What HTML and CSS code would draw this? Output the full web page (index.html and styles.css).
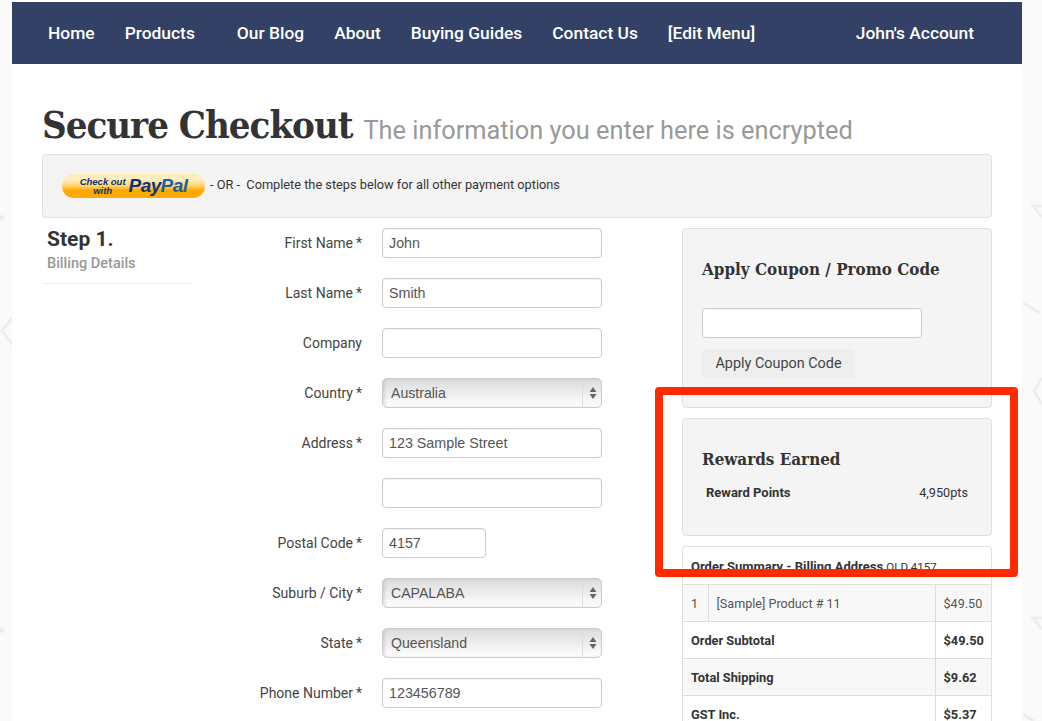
FILE: index.html
```html
<!DOCTYPE html>
<html lang="en">
<head>
    <meta charset="UTF-8">
    <title>Secure Checkout</title>
    <link rel="stylesheet" href="styles.css">
</head>
<body>

<!-- faint pattern on the page background -->
<svg class="pattern" width="1042" height="721" viewBox="0 0 1042 721">
    <g fill="none" stroke="#eeeeee" stroke-width="3">
        <path d="M12 318 L2 331 L12 344"/>
        <path d="M1042 206 L1033 206 L1042 217"/>
        <path d="M1023 303 L1040 313"/>
        <path d="M1042 378 L1034 391 L1042 404"/>
        <path d="M1042 618 L1033 618 L1042 629"/>
        <path d="M1023 714 L1034 721"/>
    </g>
    <g fill="#eeeeee">
        <circle cx="1" cy="218" r="3"/>
        <circle cx="1" cy="630" r="3"/>
    </g>
</svg>

<div class="page">
    <nav class="main-nav">
        <a href="#">Home</a>
        <a href="#" class="has-menu">Products</a>
        <a href="#">Our Blog</a>
        <a href="#">About</a>
        <a href="#">Buying Guides</a>
        <a href="#">Contact Us</a>
        <a href="#">[Edit Menu]</a>
        <a href="#" class="account">John's Account</a>
    </nav>

    <div class="content">
        <h1>Secure Checkout <small>The information you enter here is encrypted</small></h1>

        <div class="paypal-bar">
            <a href="#" class="paypal-btn">
                <span class="pp-check">Check out<br>with</span>
                <span class="pp-logo"><span class="pp-pay">Pay</span><span class="pp-pal">Pal</span></span>
            </a>
            <span class="paypal-note">- OR -&nbsp; Complete the steps below for all other payment options</span>
        </div>

        <div class="checkout">
            <div class="step">
                <h2>Step 1.</h2>
                <p>Billing Details</p>
            </div>

            <form class="billing">
                <div class="row">
                    <label>First Name<i>*</i></label>
                    <input type="text" value="John">
                </div>
                <div class="row">
                    <label>Last Name<i>*</i></label>
                    <input type="text" value="Smith">
                </div>
                <div class="row">
                    <label>Company</label>
                    <input type="text">
                </div>
                <div class="row">
                    <label>Country<i>*</i></label>
                    <div class="select-box">
                        <select><option>Australia</option></select>
                        <svg class="arrows" width="8" height="14" viewBox="0 0 8 14"><path d="M4 1 L7.5 6 L.5 6 Z M4 13 L.5 8 L7.5 8 Z"/></svg>
                    </div>
                </div>
                <div class="row">
                    <label>Address<i>*</i></label>
                    <input type="text" value="123 Sample Street">
                </div>
                <div class="row">
                    <label></label>
                    <input type="text">
                </div>
                <div class="row">
                    <label>Postal Code<i>*</i></label>
                    <input type="text" class="short" value="4157">
                </div>
                <div class="row">
                    <label>Suburb / City<i>*</i></label>
                    <div class="select-box">
                        <select><option>CAPALABA</option></select>
                        <svg class="arrows" width="8" height="14" viewBox="0 0 8 14"><path d="M4 1 L7.5 6 L.5 6 Z M4 13 L.5 8 L7.5 8 Z"/></svg>
                    </div>
                </div>
                <div class="row">
                    <label>State<i>*</i></label>
                    <div class="select-box">
                        <select><option>Queensland</option></select>
                        <svg class="arrows" width="8" height="14" viewBox="0 0 8 14"><path d="M4 1 L7.5 6 L.5 6 Z M4 13 L.5 8 L7.5 8 Z"/></svg>
                    </div>
                </div>
                <div class="row">
                    <label>Phone Number<i>*</i></label>
                    <input type="text" value="123456789">
                </div>
            </form>

            <div class="sidebar">
                <div class="panel coupon">
                    <h3>Apply Coupon / Promo Code</h3>
                    <input type="text">
                    <button type="button">Apply Coupon Code</button>
                </div>

                <div class="panel rewards">
                    <h3>Rewards Earned</h3>
                    <div class="reward-row">
                        <b>Reward Points</b>
                        <span>4,950pts</span>
                    </div>
                </div>

                <div class="summary">
                    <div class="summary-head"><b>Order Summary - Billing Address</b> <span>QLD 4157</span></div>
                    <table>
                        <colgroup>
                            <col class="col-qty">
                            <col>
                            <col class="col-price">
                        </colgroup>
                        <tr class="odd">
                            <td>1</td>
                            <td>[Sample] Product # 11</td>
                            <td>$49.50</td>
                        </tr>
                        <tr class="total">
                            <td colspan="2">Order Subtotal</td>
                            <td>$49.50</td>
                        </tr>
                        <tr class="total odd">
                            <td colspan="2">Total Shipping</td>
                            <td>$9.62</td>
                        </tr>
                        <tr class="total">
                            <td colspan="2">GST Inc.</td>
                            <td>$5.37</td>
                        </tr>
                    </table>
                </div>
            </div>
        </div>
    </div>
</div>

<div class="highlight"></div>

</body>
</html>
```

FILE: styles.css
```css
html, body {
    height: 100%;
    margin: 0;
    overflow: hidden;
}
body {
    font-family: Roboto, sans-serif;
    background-color: #fafafa;
    color: #333;
    position: relative;
}
.pattern {
    position: absolute;
    left: 0;
    top: 0;
}
.page {
    position: relative;
    margin: 0 20px 0 12px;
    padding-top: 2px;
    background-color: white;
    min-height: 100%;
}

/* top navigation */
.main-nav {
    display: flex;
    align-items: center;
    height: 62px;
    padding: 0 48px 0 36px;
    gap: 30px;
    background-color: #334166;
}
.main-nav a {
    color: white;
    font-size: 17.4px;
    line-height: 22px;
    font-weight: 500;
    text-decoration: none;
}
.main-nav .has-menu {
    margin-right: 12px;
}
.main-nav .account {
    margin-left: auto;
}

.content {
    padding: 0 30px;
}
h1 {
    margin: 39px 0 0;
    height: 51px;
    font-family: "DejaVu Serif Condensed", "DejaVu Serif", serif;
    font-size: 38px;
    line-height: 44px;
    font-weight: bold;
    letter-spacing: -1px;
    color: #333;
    white-space: nowrap;
}
h1 small {
    font-family: Roboto, sans-serif;
    font-size: 25.35px;
    font-weight: 400;
    letter-spacing: 0;
    color: #999;
    vertical-align: -1px;
}

/* paypal strip */
.paypal-bar {
    display: flex;
    align-items: center;
    height: 62px;
    padding-left: 19px;
    background-color: #f4f4f4;
    border: 1px solid #e0e0e0;
    border-radius: 4px;
}
.paypal-btn {
    display: flex;
    align-items: center;
    justify-content: center;
    gap: 3px;
    width: 143px;
    height: 24px;
    border-radius: 12px;
    background: linear-gradient(#ffe9ad, #fff0c8 20%, #ffd36b 50%, #ffa700 68%, #ffab00);
    text-decoration: none;
    font-family: "Liberation Sans", sans-serif;
    font-style: italic;
    font-weight: bold;
}
.pp-check {
    font-size: 9.5px;
    line-height: 9px;
    text-align: center;
    color: #0b3673;
}
.pp-logo {
    font-size: 19px;
    letter-spacing: -0.6px;
}
.pp-pay {
    color: #0d3277;
}
.pp-pal {
    color: #1b5ea8;
}
.paypal-note {
    margin: 0 0 4px 5px;
    font-size: 12.75px;
    color: #333;
}

.checkout {
    display: flex;
    margin-top: 10px;
}

/* step heading */
.step {
    width: 150px;
    height: 55px;
    border-bottom: 1px solid #eee;
}
.step h2 {
    margin: 0 0 0 5px;
    font-size: 21px;
    line-height: 22px;
    font-weight: bold;
}
.step p {
    margin: 5px 0 0 5px;
    font-size: 14.5px;
    font-weight: 500;
    color: #999;
}

/* billing form */
.billing {
    width: 410px;
    margin-right: 80px;
}
.row {
    display: flex;
    align-items: center;
    margin-bottom: 20px;
}
.row label {
    width: 170px;
    margin-right: 20px;
    text-align: right;
    font-size: 14px;
    color: #444;
}
.row label i {
    margin-left: 3px;
    font-style: normal;
}
input {
    box-sizing: border-box;
    width: 220px;
    height: 30px;
    padding: 0 6px;
    background: white;
    border: 1px solid #ccc;
    border-radius: 4px;
    font-family: "Liberation Sans", sans-serif;
    font-size: 14.3px;
    color: #555;
    box-shadow: inset 0 1px 1px rgba(0, 0, 0, 0.05);
}
input.short {
    width: 104px;
}
.select-box {
    position: relative;
    width: 220px;
    height: 30px;
}
.select-box select {
    appearance: none;
    box-sizing: border-box;
    width: 100%;
    height: 100%;
    padding: 0 8px;
    border: 1px solid #ccc;
    border-radius: 5px;
    background: linear-gradient(#dcdcdc, #f0f0f0 60%, white);
    box-shadow: inset 2px 0 3px rgba(0, 0, 0, 0.1);
    font-family: "Liberation Sans", sans-serif;
    font-size: 14.1px;
    color: #555;
}
.select-box::after {
    content: "";
    position: absolute;
    right: 19px;
    top: 1px;
    bottom: 1px;
    border-left: 1px solid #ddd;
}
.arrows {
    position: absolute;
    right: 5px;
    top: 8px;
    fill: #666;
}

/* right column */
.sidebar {
    width: 310px;
}
.panel {
    box-sizing: border-box;
    padding: 0 19px;
    margin-bottom: 10px;
    background-color: #f4f4f4;
    border: 1px solid #e0e0e0;
    border-radius: 4px;
}
.panel h3 {
    margin: 0;
    font-family: "DejaVu Serif Condensed", "DejaVu Serif", serif;
    font-size: 16.9px;
    line-height: 22px;
    font-weight: bold;
}
.coupon {
    height: 180px;
    padding-top: 29px;
}
.coupon input {
    display: block;
    margin-top: 28px;
}
.coupon button {
    display: block;
    width: 153px;
    height: 29px;
    margin-top: 11px;
    background-color: #eee;
    border: none;
    border-radius: 4px;
    font-family: Roboto, sans-serif;
    font-size: 14.4px;
    color: #444;
}
.rewards {
    height: 118px;
    padding-top: 29px;
}
.reward-row {
    display: flex;
    justify-content: space-between;
    margin: 15px 4px 0;
    font-size: 13px;
}
.reward-row span {
    font-size: 12.7px;
}

.summary {
    border: 1px solid #e0e0e0;
    border-radius: 4px 4px 0 0;
    border-bottom: none;
}
.summary-head {
    box-sizing: border-box;
    height: 37px;
    padding: 12px 8px 0;
    font-size: 13px;
    white-space: nowrap;
}
.summary-head span {
    font-size: 11.5px;
}
table {
    width: 100%;
    table-layout: fixed;
    border-collapse: collapse;
    font-size: 12.6px;
}
.col-qty {
    width: 25px;
}
.col-price {
    width: 56px;
}
td {
    height: 36px;
    padding: 0 8px;
    border-top: 1px solid #ddd;
    border-left: 1px solid #ddd;
    color: #555;
}
td:first-child {
    border-left: none;
}
.odd td {
    background-color: #f8f8f8;
}
.total td {
    font-size: 12.8px;
    font-weight: bold;
    color: #333;
}

/* red box drawn over the screenshot */
.highlight {
    position: absolute;
    left: 655px;
    top: 387px;
    box-sizing: border-box;
    width: 363px;
    height: 190px;
    border: 8px solid #ff2a00;
    border-radius: 4px;
}
```
